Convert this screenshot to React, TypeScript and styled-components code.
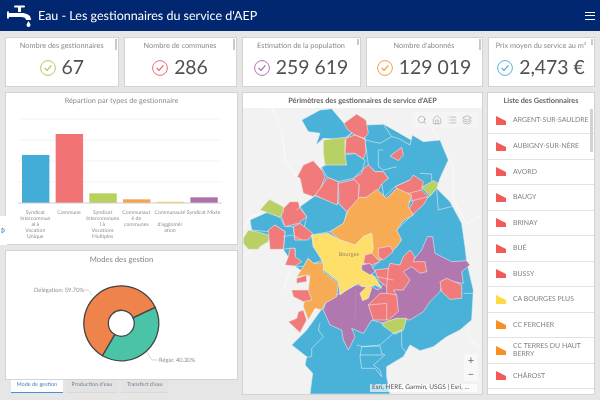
import React from "react";
import styled, { createGlobalStyle } from "styled-components";
import { Search, Home, List, Layers } from "lucide-react";

const Global = createGlobalStyle`
  html, body { margin: 0; padding: 0; background: #e6e6e6; }
  * { box-sizing: border-box; }
`;

const Page = styled.div`
  width: 600px; height: 400px; overflow: hidden; position: relative;
  background: #e6e6e6; font-family: Lato, "Open Sans", sans-serif; color: #6e6e6e;
  text-rendering: geometricPrecision; filter: blur(0.3px);
`;
const Header = styled.header`
  height: 31px; background: #00276f; color: #fff; display: flex; align-items: center;
  padding: 0 5px 0 7px;
`;
const Logo = styled.svg`width: 26px; height: 24px; flex: none;`;
const Title = styled.h1`
  flex: 1; margin: 0 0 0 5px; font-size: 12.5px; font-weight: 400; white-space: nowrap;
`;
const Burger = styled.div`
  width: 10px; height: 8px; display: flex; flex-direction: column; justify-content: space-between;
  & > i { display: block; height: 1px; background: #fff; }
`;
const KpiRow = styled.section`
  display: grid; grid-template-columns: 113.5px 113px 119px 117px 107px; column-gap: 5px;
  padding: 5.5px 0 0 5px; height: 61px;
`;
const Panel = styled.div`
  background: #fff; border: 1px solid #d3d3d3; position: relative; min-width: 0;
`;
const Kpi = styled(Panel)`
  height: 50px; display: flex; flex-direction: column; align-items: center; padding-top: 2.5px;
`;
const KpiLabel = styled.div`font-size: 7.35px; line-height: 11px; color: #8a8a8a; white-space: nowrap;`;
const KpiValue = styled.div`
  display: flex; align-items: center; gap: 6px; margin-top: 5px; font-size: 19.4px; line-height: 24px;
  color: #505050; white-space: nowrap;
`;
const Thumb = styled.i<{ $h: number }>`
  position: absolute; top: 1px; right: 0.5px; width: 2.5px; height: ${(p) => p.$h}px; background: #c9c9c9;
`;
const Main = styled.main`
  display: grid; grid-template-columns: 233px 241px 108px; column-gap: 4px; padding-left: 5px; height: 303px;
`;
const LeftCol = styled.div`display: flex; flex-direction: column; gap: 5px;`;
const ChartPanel = styled(Panel)`height: 153px; display: flex; flex-direction: column; align-items: center;`;
const PiePanel = styled(Panel)`height: 130px;`;
const PanelTitle = styled.div<{ $strong?: boolean }>`
  height: ${(p) => (p.$strong ? 15 : 16)}px; line-height: ${(p) => (p.$strong ? 15 : 16)}px; text-align: center;
  font-size: 7.3px; color: ${(p) => (p.$strong ? "#666" : "#8c8c8c")};
  font-weight: ${(p) => (p.$strong ? 700 : 400)}; white-space: nowrap; flex: none;
`;
const PieTitle = styled(PanelTitle)`font-size: 7.7px; height: 16px; color: #808080;`;
const BarSvg = styled.svg`width: 231px; height: 95px; flex: none; display: block;`;
const AxisLabels = styled.div`
  display: grid; grid-template-columns: repeat(6, 33.67px); width: 202px; align-self: flex-start;
  margin: 6px 0 0 12.5px;
`;
const AxisLabel = styled.div`
  font-size: 5.2px; line-height: 6px; color: #8f8f8f; text-align: center; white-space: nowrap;
  display: flex; flex-direction: column; align-items: center;
`;
const AxisLine = styled.span`min-height: 6px;`;
const PieSvg = styled.svg`display: block; width: 231px; height: 112px;`;
const Tabs = styled.nav`display: flex; gap: 3.5px; padding-left: 6px; margin-top: -5px; position: relative;`;
const Tab = styled.div<{ $active?: boolean }>`
  height: 12.5px; line-height: 11.5px; padding: 0 5.5px; font-size: 5.5px; white-space: nowrap;
  background: ${(p) => (p.$active ? "#fff" : "#e3e3e3")}; color: ${(p) => (p.$active ? "#4a80bd" : "#6f8398")};
  border-bottom: 1px solid ${(p) => (p.$active ? "#4a90d0" : "#dadada")};
`;
const MapPanel = styled(Panel)`height: 303px; display: flex; flex-direction: column;`;
const MapWrap = styled.div`position: relative; flex: 1; background: #f2f2f2; overflow: hidden;`;
const MapSvg = styled.svg`display: block; width: 100%; height: 100%;`;
const MapTools = styled.div`
  position: absolute; top: 4px; right: 5px; width: 65px; height: 15px; background: rgba(245,245,245,.9);
  display: flex; align-items: center; justify-content: space-around; padding: 0 3px; color: #777;
`;
const ZoomBox = styled.div`
  position: absolute; right: 4px; bottom: 13px; width: 14px; height: 27px; background: rgba(248,248,248,.9);
  display: flex; flex-direction: column; align-items: center; justify-content: space-around;
  font-size: 11px; line-height: 13px; color: #666;
`;
const Attribution = styled.div`
  position: absolute; right: 5px; bottom: 2px; width: 107px; height: 8px; line-height: 8px;
  font-size: 6.5px; background: rgba(255,255,255,.65); padding-left: 2px; color: #555; white-space: nowrap; overflow: hidden;
`;
const ListPanel = styled(Panel)`height: 303px; overflow: hidden;`;
const Row = styled.div`
  height: 25.5px; display: flex; align-items: center; gap: 7px; padding-left: 8px; border-top: 1px solid #e2e2e2;
  font-size: 6.9px; line-height: 8.5px; color: #808080;
  & > span { width: 79px; }
`;
const FirstRow = styled(Row)`border-top: none; height: 25px;`;
const Flag = styled.svg`width: 10px; height: 9px; flex: none;`;
const ListThumb = styled.i`
  position: absolute; right: 1px; top: 16px; width: 3px; height: 43px; background: #d2d2d2;
`;
const Handle = styled.div`
  position: absolute; left: 0; top: 216px; width: 7px; height: 29px; background: #fff;
  display: flex; align-items: center; justify-content: center;
`;

const kpis = [
  { label: "Nombre des gestionnaires", value: "67", color: "#a8c44f", thumb: 11 },
  { label: "Nombre de communes", value: "286", color: "#f25a5a", thumb: 11 },
  { label: "Estimation de la population", value: "259 619", color: "#a862a8", thumb: 6 },
  { label: "Nombre d'abonnés", value: "129 019", color: "#f59138", thumb: 11 },
  { label: "Prix moyen du service au m³", value: "2,473 €", color: "#45a7d8", thumb: 6 },
];

const bars = [
  { y: 195, c: "#43add8" }, { y: 132, c: "#f27373" }, { y: 310, c: "#b8d05c" },
  { y: 328, c: "#f9a24a" }, { y: 335, c: "#fedd5e" }, { y: 322, c: "#ae72aa" },
];
const axis: string[][] = [
  ["Syndicat", "Intercommun", "al à", "Vocation", "Unique"],
  ["Commune"],
  ["Syndicat", "Intercommuna", "l à", "Vocations", "Multiples"],
  ["Communaut", "é de", "communes"],
  ["Communauté", "", "d'agglomér", "ation"],
  ["Syndicat Mixte"],
];
const rows: [string, string][] = [
  ["AUBIGNY-SUR-NÈRE", "#f25a5a"], ["AVORD", "#f25a5a"], ["BAUGY", "#f25a5a"], ["BRINAY", "#f25a5a"],
  ["BUÉ", "#f25a5a"], ["BUSSY", "#f25a5a"], ["CA BOURGES PLUS", "#fedb45"], ["CC FERCHER", "#f98f24"],
  ["CC TERRES DU HAUT BERRY", "#f98f24"], ["CHÂROST", "#f25a5a"], [" ", "transparent"],
];

const C = { b: "#4ab1d9", r: "#f17a7a", g: "#b9d065", o: "#f8ab55", y: "#fedf6a", p: "#b078ae" };
const regions: [string, string][] = [
  [C.b, "245,232 375,150 430,103 600,200 590,300 660,400 680,600 500,760 250,670 210,560 165,528 130,478 35,420 85,365 180,350 225,318 245,290"],
  [C.b, "185,90 240,60 275,56 312,100 345,135 315,150 250,145 228,165 240,130 205,125"],
  [C.b, "375,105 430,103 455,140 475,145 510,165 517,135 550,155 600,150 625,210 600,265 590,295 545,290 510,270 465,290 432,322 425,280 445,265 430,245 405,245 385,225 375,150"],
  [C.b, "245,232 315,195 345,190 375,210 368,238 340,265 295,275 262,262"],
  [C.b, "180,350 225,318 297,340 320,365 312,400 270,425 215,435 185,445 200,380"],
  [C.b, "30,390 85,365 120,382 135,410 160,410 165,450 215,435 220,470 250,510 220,520 205,505 190,530 165,528 165,475 150,475 130,478 135,425 105,405 85,425 35,420"],
  [C.b, "470,420 520,372 545,330 570,318 590,295 630,335 665,400 675,470 680,515 700,600 695,690 660,720 620,740 580,770 540,782 510,765 490,800 440,830 440,860 450,912 210,912 218,850 195,825 200,800 155,765 200,720 250,650 380,600 400,530 470,470"],
  [C.g, "250,150 318,142 340,125 315,150 315,195 320,225 255,225 250,190"],
  [C.r, "312,100 350,72 378,90 385,130 372,145 345,135 322,118"],
  [C.r, "318,145 345,135 375,148 378,185 370,207 345,190 315,190"],
  [C.r, "450,198 485,172 490,195 475,212"],
  [C.r, "172,260 190,225 220,212 245,240 255,260 240,300 220,320 190,310 180,265"],
  [C.r, "245,290 262,262 295,275 292,345 245,325 225,315"],
  [C.r, "295,280 345,268 358,285 355,335 320,365 297,340"],
  [C.r, "340,265 365,250 368,238 385,225 405,245 430,245 445,265 425,282 415,300 380,322 355,325 358,285"],
  [C.r, "465,290 510,270 520,255 550,275 545,300 565,320 550,345 520,372 505,360 520,335 505,310 490,310"],
  [C.r, "85,420 105,405 135,425 130,478 90,478"],
  [C.r, "120,365 150,335 175,335 180,355 200,380 175,400 135,410"],
  [C.r, "160,410 180,400 218,430 205,450 165,450"],
  [C.g, "10,445 25,420 50,425 85,435 85,455 60,470 55,478 25,478 10,460"],
  [C.g, "60,360 88,328 130,350 130,365 120,382"],
  [C.g, "545,292 580,272 595,280 590,295 570,318"],
  [C.o, "270,425 310,400 325,360 358,322 380,322 410,298 440,325 470,295 515,315 505,350 520,375 490,392 470,420 485,450 470,470 455,485 420,510 395,500 395,430 370,440 345,465 300,450"],
  [C.p, "562,440 578,440 585,490 635,515 680,512 690,525 665,545 670,580 610,570 600,605 570,635 550,665 510,690 470,685 430,700 395,690 370,730 335,715 345,740 325,780 310,750 305,720 270,705 250,660 258,635 290,615 320,600 345,585 385,585 415,600 450,560 480,540 520,510 545,480"],
  [C.y, "215,435 265,430 300,450 345,465 370,440 395,430 400,475 395,490 375,525 365,535 405,560 425,595 405,585 395,590 365,590 355,580 320,600 300,615 295,575 250,540 245,510 220,470"],
  [C.y, "385,585 395,595 385,625 368,632 360,610"],
  [C.o, "205,505 220,520 250,518 250,545 295,580 290,620 255,640 245,660 225,655 205,690 190,650 195,620 205,600 210,555 170,560 190,530"],
  [C.r, "170,565 200,555 200,575 170,580"],
  [C.r, "155,600 205,600 215,630 190,635 160,620"],
  [C.r, "150,475 165,475 165,500 185,515 165,528 135,525 145,500"],
  [C.r, "190,660 200,690 180,728 145,695 170,685 175,665"],
  [C.r, "415,475 450,468 460,485 430,510 415,500"],
  [C.r, "375,495 395,490 420,515 395,525 370,520"],
  [C.p, "365,525 390,520 405,545 390,555 365,540"],
  [C.r, "405,540 445,535 450,520 480,525 490,500 510,480 525,500 520,515 555,515 560,545 540,550 515,530 490,545 510,570 490,600 460,600 470,615 475,665 445,690 400,690 385,645 420,610 440,610 440,590 415,570"],
  [C.r, "600,575 620,565 665,585 665,625 630,628 605,605"],
  [C.g, "425,700 470,685 500,685 490,720 465,733 430,708"],
];
const lines = [
  "240,700 235,720 250,740 215,775 215,800 195,802",
  "365,770 420,768 425,790 435,795 400,825 420,840 425,860 405,835 365,835 360,800 365,770",
  "360,795 430,795",
  "350,765 370,770 420,765 460,730 485,720 485,770 500,790",
  "670,610 700,610",
  "590,300 595,360 640,348",
  "430,180 415,180 415,230 430,240 470,230",
  "375,150 420,160 455,140",
  "540,250 575,252 575,272",
  "170,360 185,345",
  "130,440 155,435 185,450",
  "445,535 440,590",
  "410,560 460,570",
  "440,610 470,615",
  "385,645 440,640 440,690",
  "505,310 545,300",
  "505,335 565,320",
];
const faint = ["348,600 345,690", "490,500 515,530"];
const roads = [
  "95,54 125,120 135,210 170,260",
  "9,420 30,380 60,372",
  "575,110 640,230 640,330 680,400 720,380",
  "9,500 50,470",
  "680,720 690,750 726,775",
  "150,540 130,600",
];

function arc(cx: number, cy: number, R: number, r: number, a0: number, a1: number) {
  const p = (rad: number, a: number) => {
    const t = (a * Math.PI) / 180;
    return `${(cx + rad * Math.sin(t)).toFixed(2)} ${(cy - rad * Math.cos(t)).toFixed(2)}`;
  };
  const large = a1 - a0 > 180 ? 1 : 0;
  return `M${p(R, a0)}A${R} ${R} 0 ${large} 1 ${p(R, a1)}L${p(r, a1)}A${r} ${r} 0 ${large} 0 ${p(r, a0)}Z`;
}

export default function App() {
  return (
    <Page>
      <Global />
      <Header>
        <Logo viewBox="7 3 26 24" aria-hidden>
          <g fill="#fff">
            <rect x="14" y="4.5" width="11" height="2" rx="1" />
            <rect x="18" y="6" width="3" height="5" />
            <path d="M7 10.5h2v1.5h12c6 0 10 2 10 7h-5c0-2-2-3-5-3H9v1.5H7z" />
            <path d="M28.5 20c1 2 2 3 2 4a2 2 0 0 1-4 0c0-1 1-2 2-4z" />
          </g>
        </Logo>
        <Title>Eau - Les gestionnaires du service d'AEP</Title>
        <Burger><i /><i /><i /></Burger>
      </Header>
      <KpiRow>
        {kpis.map((k) => (
          <Kpi key={k.label}>
            <KpiLabel>{k.label}</KpiLabel>
            <KpiValue>
              <svg width="16" height="16" viewBox="0 0 16 16" aria-hidden>
                <circle cx="8" cy="8" r="7.4" fill="none" stroke={k.color} strokeWidth="0.9" />
                <path d="M4.6 7.8l2.4 2.6 4.4-5" fill="none" stroke={k.color} strokeWidth="1.1" />
              </svg>
              {k.value}
            </KpiValue>
            <Thumb $h={k.thumb} />
          </Kpi>
        ))}
      </KpiRow>
      <Main>
        <LeftCol>
          <ChartPanel>
            <PanelTitle>Répartion par types de gestionnaire</PanelTitle>
            <BarSvg viewBox="6 109 231 95" aria-hidden>
              {[119, 140, 161, 182].map((y) => (
                <line key={y} x1="18" x2="222" y1={y} y2={y} stroke="#f3f3f3" strokeWidth="1" />
              ))}
              {bars.map((b, i) => {
                const x = 22 + i * 33.67;
                const top = 90 + b.y / 3;
                return <rect key={i} x={x} y={top} width="27.4" height={203 - top} fill={b.c} />;
              })}
              <line x1="18" x2="222" y1="203" y2="203" stroke="#ccc" strokeWidth="1" />
            </BarSvg>
            <AxisLabels>
              {axis.map((parts, i) => (
                <AxisLabel key={i}>
                  {parts.map((l, j) => <AxisLine key={j}>{l}</AxisLine>)}
                </AxisLabel>
              ))}
            </AxisLabels>
          </ChartPanel>
          <PiePanel>
            <PieTitle>Modes des gestion</PieTitle>
            <PieSvg viewBox="6 267 231 112">
              <path d={arc(121.3, 323.3, 37.5, 13, 210, 425)} fill="#ef834c" stroke="#444" strokeWidth="1.3" />
              <path d={arc(121.3, 323.3, 37.5, 13, 65, 210)} fill="#4bc3a6" stroke="#444" strokeWidth="1.3" />
              <path d="M84 290h4l4 5" fill="none" stroke="#bbb" strokeWidth="0.6" />
              <path d="M147 352l5 8h6" fill="none" stroke="#bbb" strokeWidth="0.6" />
              <text x="34" y="292" fontSize="5.8" fill="#8f8f8f" fontFamily="Lato, sans-serif">Délégation: 59.70%</text>
              <text x="159" y="362" fontSize="5.8" fill="#8f8f8f" fontFamily="Lato, sans-serif">Régie: 40.30%</text>
            </PieSvg>
          </PiePanel>
          <Tabs>
            <Tab $active>Mode de gestion</Tab>
            <Tab>Production d'eau</Tab>
            <Tab>Transfert d'eau</Tab>
          </Tabs>
        </LeftCol>
        <MapPanel>
          <PanelTitle $strong>Périmètres des gestionnaires de service d'AEP</PanelTitle>
          <MapWrap>
            <MapSvg viewBox="9 54 717 858" preserveAspectRatio="none">
              {roads.map((r, i) => <polyline key={i} points={r} fill="none" stroke="#fff" strokeWidth="2" />)}
              {regions.map(([c, p], i) => (
                <polygon key={i} points={p} fill={c} stroke="#e9eef0" strokeWidth={i === 0 ? 0 : 1.8} strokeLinejoin="round" />
              ))}
              {lines.map((l, i) => <polyline key={i} points={l} fill="none" stroke="#eef6f8" strokeWidth="1.6" />)}
              {faint.map((l, i) => <polyline key={i} points={l} fill="none" stroke="#c79fc5" strokeWidth="1" />)}
              <text x="296" y="499" fontSize="16" fill="#8a8668" fontFamily="Lato, sans-serif" letterSpacing="0.6">Bourges</text>
            </MapSvg>
            <MapTools>
              <Search size={10} strokeWidth={1} />
              <Home size={10} strokeWidth={1} />
              <List size={10} strokeWidth={1} />
              <Layers size={10} strokeWidth={1} />
            </MapTools>
            <ZoomBox><span>+</span><span>−</span></ZoomBox>
            <Attribution>Esri, HERE, Garmin, USGS | Esri, ...</Attribution>
          </MapWrap>
        </MapPanel>
        <ListPanel>
          <PanelTitle $strong>Liste des Gestionnaires</PanelTitle>
          <FirstRow>
            <Flag viewBox="0 0 10 9" aria-hidden><path d="M0 0l10 5v4H0z" fill="#f25a5a" /></Flag>
            <span>ARGENT-SUR-SAULDRE</span>
          </FirstRow>
          {rows.map(([name, c], i) => (
            <Row key={i}>
              <Flag viewBox="0 0 10 9" aria-hidden><path d="M0 0l10 5v4H0z" fill={c} /></Flag>
              <span>{name}</span>
            </Row>
          ))}
          <ListThumb />
        </ListPanel>
      </Main>
      <Handle>
        <svg width="5" height="7" viewBox="0 0 5 7" aria-hidden><path d="M1 1l3 2.5L1 6z" fill="none" stroke="#4a90d0" strokeWidth="0.9" /></svg>
      </Handle>
    </Page>
  );
}
